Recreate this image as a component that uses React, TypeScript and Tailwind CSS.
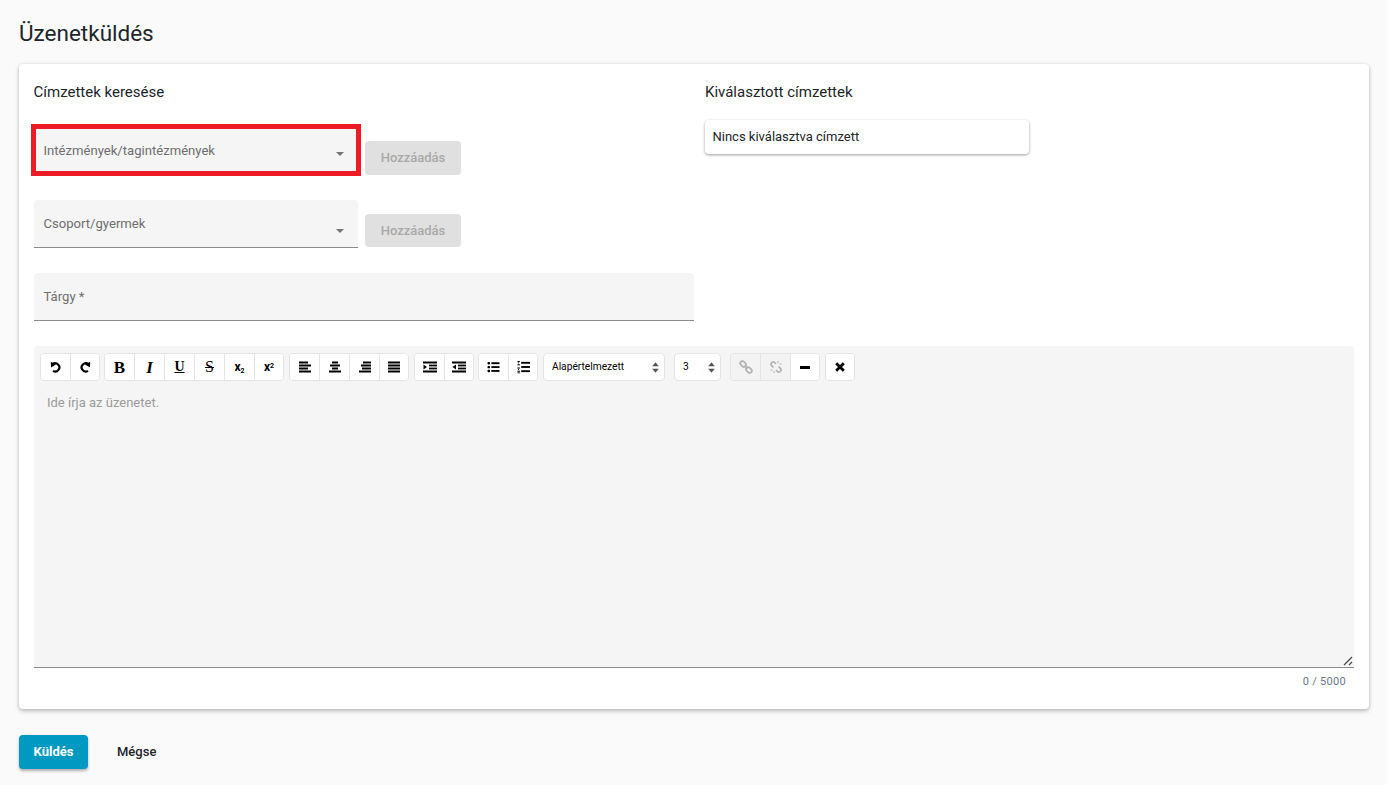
import type { ReactNode } from "react";

const font = { fontFamily: "Roboto, sans-serif" };

function Caret({ className }: { className: string }) {
  return <span className={`absolute h-0 w-0 border-x-[4.5px] border-t-[4px] border-x-transparent border-t-[#757575] ${className}`} />;
}

function SelectField({ label, className, labelClass }: { label: string; className: string; labelClass: string }) {
  return (
    <div className={`relative w-[324px] rounded-t-[4px] bg-[#f5f5f5] ${className}`}>
      <span className={`absolute left-[9.5px] text-[13.1px] leading-[20px] text-[#6e6e6e] ${labelClass}`}>{label}</span>
    </div>
  );
}

function AddButton({ className }: { className: string }) {
  return (
    <button disabled className={`w-[96px] rounded-[4px] bg-[#e0e0e0] text-[13px] font-medium text-[#a9a9a9] ${className}`}>
      Hozzáadás
    </button>
  );
}

function Lines({ rows }: { rows: [number, number][] }) {
  return (
    <svg width="12" height="12" viewBox="0 0 12 12" fill="#000">
      {rows.map(([x, w], i) => (
        <rect key={i} x={x} y={0.5 + i * 3} width={w} height="2" />
      ))}
    </svg>
  );
}

function Indent({ outdent }: { outdent?: boolean }) {
  return (
    <svg width="14" height="12" viewBox="0 0 14 12" fill="#000">
      <rect x="0" y="0.5" width="14" height="2" />
      <rect x="6" y="3.6" width="8" height="1.8" />
      <rect x="6" y="6.6" width="8" height="1.8" />
      <rect x="0" y="9.5" width="14" height="2" />
      <path d={outdent ? "M4 3.5v5L0.5 6z" : "M0.5 3.5v5L4 6z"} />
    </svg>
  );
}

function BulletList() {
  return (
    <svg width="13" height="12" viewBox="0 0 14 14" fill="#000">
      {[1.2, 5.7, 10.2].map((y) => (
        <g key={y}>
          <rect x="0" y={y} width="3" height="2.8" rx="1" />
          <rect x="4.5" y={y + 0.3} width="9.5" height="2.2" />
        </g>
      ))}
    </svg>
  );
}

function NumberList() {
  return (
    <svg width="13" height="14" viewBox="0 0 14 14" fill="#000">
      {[0.5, 4, 7.5, 11].map((y) => (
        <rect key={y} x="0.5" y={y} width="2.6" height="1.2" />
      ))}
      <rect x="1" y="2" width="1.2" height="1" />
      <rect x="1" y="9" width="1.2" height="1" />
      <rect x="0.5" y="12.8" width="2.6" height="1" />
      {[1.5, 6, 10.5].map((y) => (
        <rect key={y} x="4.5" y={y} width="9.5" height="2" />
      ))}
    </svg>
  );
}

function UndoIcon({ redo }: { redo?: boolean }) {
  return (
    <svg width="12" height="12" viewBox="0 0 12 12" className={redo ? "-scale-x-100" : ""}>
      <path d="M2.6 3.2A4.1 4.1 0 1 1 3 9.8" fill="none" stroke="#000" strokeWidth="2.2" />
      <path d="M0.8 0.8L6 3.6 1 6.6z" fill="#000" />
    </svg>
  );
}

function ChainIcon({ broken }: { broken?: boolean }) {
  return (
    <svg width="14" height="14" viewBox="0 0 14 14" fill="none" stroke="#b0b0b0" strokeWidth="1.6">
      {broken ? (
        <>
          <path d="M4.5 7.5L2.6 5.6a2 2 0 0 1 0-2.8l.3-.3a2 2 0 0 1 2.7 0L7 4" />
          <path d="M9.5 6.5l1.9 1.9a2 2 0 0 1 0 2.8l-.3.3a2 2 0 0 1-2.7 0L7 10" />
          <path d="M9 1v2M12.5 4h-2M1.5 10h2M5 13v-2" strokeWidth="1" />
        </>
      ) : (
        <>
          <rect x="0.9" y="1.9" width="6.4" height="4.2" rx="2.1" transform="rotate(42 4.1 4)" />
          <rect x="6.7" y="7.9" width="6.4" height="4.2" rx="2.1" transform="rotate(42 9.9 10)" />
          <path d="M5.5 5.5L8.5 8.5" />
        </>
      )}
    </svg>
  );
}

function XIcon() {
  return (
    <svg width="10" height="10" viewBox="0 0 10 10" stroke="#000" strokeWidth="2.8">
      <path d="M1.2 1.2L8.8 8.8M8.8 1.2L1.2 8.8" />
    </svg>
  );
}

function Updown() {
  return (
    <svg width="7" height="11" viewBox="0 0 7 11" fill="#555">
      <path d="M3.5 0.3L6.8 4.3H0.2z" />
      <path d="M3.5 10.7L0.2 6.7H6.8z" />
    </svg>
  );
}

function Tool({ children, disabled }: { children: ReactNode; disabled?: boolean }) {
  return (
    <span className={`flex h-full w-[30px] items-center justify-center border-l border-[#e4e4e4] first:w-[29px] first:border-l-0 last:w-[29px] only:w-[28px] ${disabled ? "bg-[#f3f3f3]" : "bg-white"} text-black`}>
      {children}
    </span>
  );
}

function Group({ children, className = "" }: { children: ReactNode; className?: string }) {
  return <div className={`flex h-[28px] overflow-hidden rounded-[4px] border border-[#e4e4e4] ${className}`}>{children}</div>;
}

const serif = { fontFamily: "'Liberation Serif', serif" };

function Toolbar() {
  return (
    <div className="flex items-center pl-[6px] pt-[7px]">
      <Group>
        <Tool><UndoIcon /></Tool>
        <Tool><UndoIcon redo /></Tool>
      </Group>
      <Group className="ml-[4px]">
        <Tool><span className="text-[17px] font-bold leading-none" style={serif}>B</span></Tool>
        <Tool><span className="text-[17px] italic leading-none font-bold" style={serif}>I</span></Tool>
        <Tool><span className="text-[14px] font-bold leading-none underline" style={serif}>U</span></Tool>
        <Tool><span className="text-[16px] leading-none line-through" style={serif}>S</span></Tool>
        <Tool><span className="text-[12px] font-bold leading-none">x<sub className="text-[7px]">2</sub></span></Tool>
        <Tool><span className="text-[12px] font-bold leading-none">x<sup className="text-[7px]">2</sup></span></Tool>
      </Group>
      <Group className="ml-[5px]">
        <Tool><Lines rows={[[0, 9], [0, 12], [0, 9], [0, 12]]} /></Tool>
        <Tool><Lines rows={[[3, 6], [1, 10], [3, 6], [0, 12]]} /></Tool>
        <Tool><Lines rows={[[4, 8], [2, 10], [3, 9], [0, 12]]} /></Tool>
        <Tool><Lines rows={[[0, 12], [0, 12], [0, 12], [0, 12]]} /></Tool>
      </Group>
      <Group className="ml-[5px]">
        <Tool><Indent /></Tool>
        <Tool><Indent outdent /></Tool>
      </Group>
      <Group className="ml-[4px]">
        <Tool><BulletList /></Tool>
        <Tool><NumberList /></Tool>
      </Group>
      <div className="ml-[5px] flex h-[28px] w-[122px] items-center justify-between rounded-[4px] border border-[#e4e4e4] bg-white pl-[8px] pr-[5px] text-[10.2px] text-black">
        Alapértelmezett
        <Updown />
      </div>
      <div className="ml-[9px] flex h-[28px] w-[47px] items-center justify-between rounded-[4px] border border-[#e4e4e4] bg-white pl-[8px] pr-[5px] text-[10.2px] text-black">
        3
        <Updown />
      </div>
      <Group className="ml-[9px]">
        <Tool disabled><ChainIcon /></Tool>
        <Tool disabled><ChainIcon broken /></Tool>
        <Tool><span className="h-[3px] w-[10px] bg-black" /></Tool>
      </Group>
      <Group className="ml-[5px]">
        <Tool><XIcon /></Tool>
      </Group>
    </div>
  );
}

export default function App() {
  return (
    <div className="min-h-screen bg-[#fafafa] pl-[19px] pr-[18px] text-[#212529]" style={font}>
      <h1 className="pb-[16px] pt-[18px] text-[22.5px] font-normal leading-[30px]">Üzenetküldés</h1>

      <section className="h-[645px] rounded-[4px] bg-white px-[15px] pt-[18px] shadow-[0_2px_4px_rgba(0,0,0,0.25),0_0_3px_rgba(0,0,0,0.08)]">
        <div className="flex">
          <div className="w-[660px]">
            <h2 className="-ml-[0.5px] text-[15px] leading-[20px]">Címzettek keresése</h2>

            <div className="relative mt-[24px] flex w-[427px] items-start">
              <SelectField label="Intézmények/tagintézmények" className="h-[47px]" labelClass="top-[15px]" />
              <Caret className="left-[302px] top-[26px]" />
              <AddButton className="ml-[7px] mt-[15px] h-[34px]" />
              {/* piros keret a képen */}
              <span className="absolute -left-[3px] -top-[2px] h-[52px] w-[330px] border-[5px] border-[#ed1c24]" />
            </div>

            <div className="relative mt-[25px] flex w-[427px] items-start">
              <SelectField label="Csoport/gyermek" className="h-[48px] border-b border-[#8a8a8a]" labelClass="top-[14px]" />
              <Caret className="left-[302px] top-[29px]" />
              <AddButton className="ml-[7px] mt-[14px] h-[33px]" />
            </div>

            <div className="relative mt-[25px] h-[48px] rounded-t-[4px] border-b border-[#8a8a8a] bg-[#f5f5f5]">
              <span className="absolute left-[9.5px] top-[14px] text-[13.1px] leading-[20px] text-[#6e6e6e]">Tárgy *</span>
            </div>
          </div>

          <div className="ml-[11px] w-[324px]">
            <h2 className="text-[15px] leading-[20px]">Kiválasztott címzettek</h2>
            <div className="mt-[18px] flex h-[34px] items-center rounded-[4px] bg-white px-[7.5px] text-[13px] shadow-[0_1px_3px_rgba(0,0,0,0.4)]">
              Nincs kiválasztva címzett
            </div>
          </div>
        </div>

        <div className="relative mt-[25px] h-[322px] rounded-t-[4px] border-b border-[#8a8a8a] bg-[#f5f5f5]">
          <Toolbar />
          <p className="pl-[13px] pt-[12px] text-[13px] leading-[20px] text-[#9b9b9b]">Ide írja az üzenetet.</p>
          <svg className="absolute bottom-[1px] right-[1px]" width="10" height="10" viewBox="0 0 10 10" stroke="#444" strokeWidth="1.2">
            <path d="M1 9L9 1M6 9L9 6" />
          </svg>
        </div>
        <p className="pr-[8px] pt-[7px] text-right text-[11px] leading-[14px] tracking-[0.3px] text-[#6b7785]">0 / 5000</p>
      </section>

      <div className="mt-[26px] flex items-center">
        <button className="h-[34px] w-[69px] rounded-[4px] bg-[#0099c2] text-[13px] font-bold text-white shadow-[0_2px_3px_rgba(0,0,0,0.3)]">Küldés</button>
        <button className="ml-[29px] text-[13px] font-medium text-[#212529]">Mégse</button>
      </div>
    </div>
  );
}
